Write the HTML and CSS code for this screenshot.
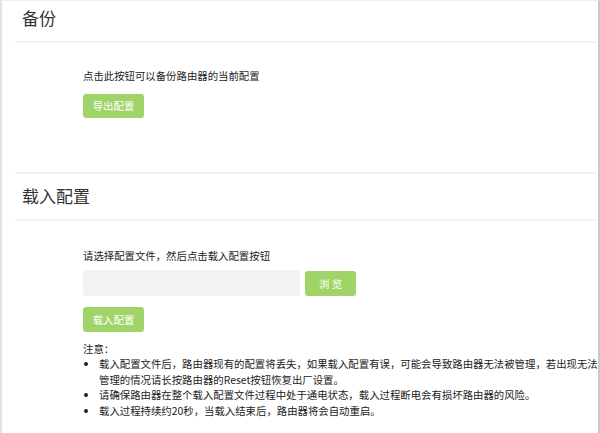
FILE: index.html
```html
<!DOCTYPE html>
<html lang="zh-CN">
<head>
<meta charset="utf-8">
<title>备份</title>
<link rel="stylesheet" href="styles.css">
</head>
<body>
<div class="frame">
  <div class="head head-first"><h2 class="title">备份</h2></div>
  <div class="body body-backup">
    <p class="desc">点击此按钮可以备份路由器的当前配置</p>
    <button class="btn btn-export">导出配置</button>
  </div>
  <div class="head head-second"><h2 class="title">载入配置</h2></div>
  <div class="body body-load">
    <p class="desc">请选择配置文件，然后点击载入配置按钮</p>
    <div class="file-row">
      <div class="file-input"></div>
      <button class="btn btn-browse">浏 览</button>
    </div>
    <button class="btn btn-load">载入配置</button>
    <p class="note-title">注意：</p>
    <ul class="notes">
      <li>载入配置文件后，路由器现有的配置将丢失，如果载入配置有误，可能会导致路由器无法被管理，若出现无法管理的情况请长按路由器的Reset按钮恢复出厂设置。</li>
      <li>请确保路由器在整个载入配置文件过程中处于通电状态，载入过程断电会有损坏路由器的风险。</li>
      <li>载入过程持续约20秒，当载入结束后，路由器将会自动重启。</li>
    </ul>
  </div>
</div>
</body>
</html>
```

FILE: styles.css
```css
html, body {
  margin: 0;
  padding: 0;
  background: #ffffff;
}
body {
  font-family: "Noto Sans CJK SC", "Microsoft YaHei", "Liberation Sans", sans-serif;
  color: #222222;
}
.frame {
  box-sizing: border-box;
  width: 600px;
  height: 433px;
  border-top: 1px solid #eeeeee;
  border-left: 2px solid #e2e2e2;
  border-right: 2px solid #c9c9c9;
  overflow: hidden;
}
.head {
  box-sizing: border-box;
  margin: 0 1px 0 13px;
  padding-left: 7px;
  display: flex;
  align-items: center;
  border-bottom: 2px solid #f1f1f1;
}
.head-first {
  height: 42px;
  padding-bottom: 6px;
}
.head-second {
  height: 49px;
  border-top: 2px solid #f1f1f1;
  padding-bottom: 1px;
}
.title {
  margin: 0;
  font-size: 17px;
  font-weight: normal;
  color: #333333;
  line-height: 20px;
}
.body {
  box-sizing: border-box;
  padding-left: 81px;
}
.body-backup {
  height: 129px;
  padding-top: 27px;
}
.body-load {
  padding-top: 29px;
}
.desc {
  margin: 0;
  font-size: 10.4px;
  line-height: 12px;
  color: #222222;
}
.btn {
  display: block;
  border: none;
  border-radius: 3px;
  background: #a0d468;
  color: #ffffff;
  font-family: inherit;
  font-size: 10.4px;
  line-height: 12px;
  padding: 0;
  cursor: pointer;
}
.btn-export {
  margin-top: 12px;
  width: 61px;
  height: 24px;
}
.file-row {
  display: flex;
  align-items: center;
  gap: 5px;
  margin-top: 8px;
}
.file-input {
  width: 217px;
  height: 26px;
  background: #f2f2f2;
  border-radius: 2px;
}
.btn-browse {
  width: 51px;
  height: 25px;
  margin-top: 1px;
}
.btn-load {
  margin-top: 11px;
  width: 61px;
  height: 25px;
}
.note-title {
  margin: 9px 0 0 0;
  font-size: 10.4px;
  line-height: 15px;
}
.notes {
  margin: 0;
  padding: 0 0 0 16px;
  width: 504px;
  font-size: 10.4px;
  line-height: 15.5px;
  list-style: disc;
}
.notes li {
  padding-left: 0;
}
```
